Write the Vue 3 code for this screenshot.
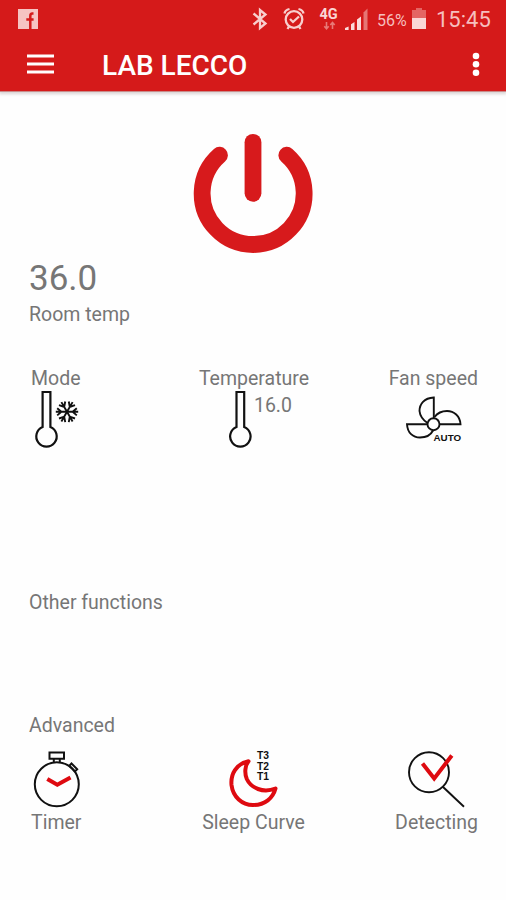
<template>
  <div class="screen">
    <header class="header">
      <div class="status-bar">
        <svg class="facebook" width="20" height="20" viewBox="0 0 20 20">
          <path fill="#f6c3c2" d="M0 0H20V20H0Z" />
          <path fill="none" stroke="#d51a1a" stroke-width="2.5" d="M15.5 4.6H14.3Q12.3 4.6 12.3 7V20M8.3 10.6H15.6" />
        </svg>
        <div class="status-icons">
          <svg width="182" height="38" viewBox="246 0 182 38">
            <path fill="none" stroke="#f8cfce" stroke-width="2.3" d="M253.5 13.5L265.5 23.5L260 28V10L265.5 14.5L253.5 24.5" />
            <g fill="none" stroke="#f8cfce" stroke-width="2.3">
              <circle cx="294" cy="19.5" r="8.3" />
              <path d="M290 19L293 22L299 16.5M284.5 13.5Q285 10 289.5 9M303.5 13.5Q303 10 298.5 9M289 26.5L287.5 29M299 26.5L300.5 29" />
            </g>
            <text class="network" x="319.5" y="18.5">4G</text>
            <path fill="none" stroke="#e87a78" stroke-width="1.6" d="M326.5 22V28.5M324.3 26.3L326.5 28.7L328.7 26.3M332.5 29V22.5M330.3 25L332.5 22.5L334.7 25" />
            <path fill="#fbdcdb" d="M345 30V28L348.6 26.5V30ZM351 24.2L354.5 22V30H351ZM357 19.5L361 16.5V30H357Z" />
            <path fill="#e67674" d="M363.5 12.5L367.5 8.5V30H363.5Z" />
            <text class="percent" x="377" y="25.5">56%</text>
            <path fill="#e46563" d="M412 10H416V8H422V10H426V18H412Z" />
            <path fill="#fad6d5" d="M412 18H426V29H412Z" />
          </svg>
          <span class="clock">15:45</span>
        </div>
      </div>
      <div class="toolbar">
        <svg width="27" height="21" viewBox="0 0 27 21">
          <path fill="none" stroke="#fff" stroke-width="3" d="M0 2H27M0 10H27M0 18H27" />
        </svg>
        <h1 class="title">LAB LECCO</h1>
        <svg class="more" width="8" height="26" viewBox="0 0 8 26">
          <g fill="#fff">
            <circle cx="4" cy="4" r="3.3" />
            <circle cx="4" cy="12.3" r="3.3" />
            <circle cx="4" cy="20.7" r="3.3" />
          </g>
        </svg>
      </div>
    </header>

    <main class="content">
      <svg class="power" width="122" height="122" viewBox="192 132 122 122">
        <g fill="none" stroke="#d71a1c" stroke-width="16.8" stroke-linecap="round">
          <path d="M219.5 155.2A51 51 0 1 0 286.8 155.2" />
          <path d="M253 142.3V193.3" />
        </g>
      </svg>

      <section class="room">
        <div class="room-value">36.0</div>
        <div class="label">Room temp</div>
      </section>

      <section class="row controls">
        <div class="item mode">
          <div class="label">Mode</div>
          <svg width="50" height="60" viewBox="32 390 50 60">
            <path class="line" stroke-width="2.2" d="M42.6 427V392H50.4V427A10.2 10.2 0 1 1 42.6 427Z" />
            <g class="line" stroke-width="1.9">
              <path
                v-for="angle in arms"
                :key="angle"
                :transform="`rotate(${angle} 67 411.8)`"
                d="M67 411.8H78.2M76.8 408.2L72.6 411.8L76.8 415.4"
              />
            </g>
          </svg>
        </div>
        <div class="item temperature">
          <div class="label">Temperature</div>
          <div class="temperature-row">
            <svg width="26" height="60" viewBox="228 390 26 60">
              <path class="line" stroke-width="2.2" d="M236.5 427V392H244.2V427A10.2 10.2 0 1 1 236.5 427Z" />
            </svg>
            <span class="label target">16.0</span>
          </div>
        </div>
        <div class="item fan">
          <div class="label">Fan speed</div>
          <svg width="62" height="60" viewBox="402 390 62 60">
            <g class="line" stroke-width="1.9">
              <circle cx="433.5" cy="424.2" r="6" />
              <path d="M433.8 418V397.5C424 398 419.5 404 419.5 411C420 416 423 420 427.5 423" />
              <path d="M439.5 424.2H460.5C460 416 454 411 447 411C441.5 411 437.5 413 434.5 417" />
              <path d="M427.5 424.2H407C407.5 433 413 437.5 420 437.5C427 437.5 431 434.5 433 430.5" />
            </g>
            <text class="auto" x="433.5" y="441">AUTO</text>
          </svg>
        </div>
      </section>

      <div class="label other">Other functions</div>
      <div class="label advanced">Advanced</div>

      <section class="row functions">
        <div class="item timer">
          <svg width="52" height="60" viewBox="31 749 52 60">
            <g class="line" stroke-width="2">
              <circle cx="56.8" cy="784.3" r="22" />
              <path d="M49.5 752.5H64V758.8H49.5ZM53.8 759V762.5M59.8 759V762.5" />
              <path d="M71.5 763.5L77.2 769.2L75 771.4L69.3 765.7Z" />
            </g>
            <path class="accent" d="M47.3 779L57.3 784.8L70.5 777.4" />
          </svg>
          <div class="label">Timer</div>
        </div>
        <div class="item sleep">
          <svg width="52" height="60" viewBox="228 749 52 60">
            <path class="accent" stroke-linejoin="round" d="M248.5 761.3C236 764 230.5 774 231.5 785C233 797 242 805 253 805C265 805 273 798 275.5 788.5C263 793.5 251 788 246.8 779C244.3 773 245 765.5 248.5 761.3Z" />
            <g class="steps">
              <text x="257" y="759.2">T3</text>
              <text x="257" y="769.7">T2</text>
              <text x="257" y="780.2">T1</text>
            </g>
          </svg>
          <div class="label">Sleep Curve</div>
        </div>
        <div class="item detecting">
          <svg width="60" height="60" viewBox="406 749 60 60">
            <g class="line" stroke-width="1.9">
              <circle cx="429" cy="772.2" r="20" />
              <path d="M442.5 786.5L464 806.8" />
            </g>
            <path class="accent" d="M422.5 763.5L434.2 778.5L451.8 755.5" />
          </svg>
          <div class="label">Detecting</div>
        </div>
      </section>
    </main>
  </div>
</template>

<script setup>
// snowflake arms, in degrees
const arms = [0, 60, 120, 180, 240, 300]
</script>

<style>
body {
  margin: 0;
  background: #fefefe;
}
</style>

<style scoped>
.screen {
  width: 506px;
  height: 900px;
  overflow: hidden;
  background: #fefefe;
  font-family: Roboto, "Liberation Sans", sans-serif;
  color: #767676;
}

svg {
  display: block;
  flex: none;
}

.header {
  height: 91px;
  background: #d51a1a;
  border-bottom: 1px solid #c98b8a;
  box-shadow: 0 1px 3px 1px #d8d3d3;
}

.status-bar {
  display: flex;
  justify-content: space-between;
  height: 38px;
}

.facebook {
  margin: 9px 0 0 18px;
}

.status-icons {
  display: flex;
  width: 260px;
}

.network {
  font-size: 14.5px;
  font-weight: 700;
  fill: #fad6d5;
}

.percent {
  font-size: 16px;
  fill: #f6bfbe;
}

.clock {
  margin-left: 8px;
  line-height: 40px;
  font-size: 22px;
  color: #f6bfbe;
}

.toolbar {
  display: flex;
  align-items: center;
  height: 53px;
  padding-left: 27px;
}

.title {
  margin: 0 0 0 48px;
  height: 53px;
  line-height: 55px;
  font-size: 28px;
  font-weight: 500;
  color: #fff;
}

.more {
  margin: 0 26px 0 auto;
}

.power {
  margin: 40px auto 0;
}

.room {
  margin: 5px 0 0 29px;
}

.room-value {
  height: 43px;
  line-height: 40px;
  font-size: 35px;
}

.label {
  height: 24px;
  line-height: 26px;
  font-size: 19.5px;
  white-space: nowrap;
}

.line {
  fill: none;
  stroke: #111;
}

.accent {
  fill: none;
  stroke: #de0a10;
  stroke-width: 4;
}

/* the middle column stays centred whatever the side labels measure */
.row {
  display: grid;
  grid-template-columns: 1fr auto 1fr;
}

.item:last-child {
  justify-self: end;
}

.controls {
  margin-top: 40px;
  padding: 0 28px 0 31px;
}

.temperature {
  margin-left: -1px;
}

.temperature-row {
  display: flex;
  margin-left: 29px;
}

.target {
  margin-top: 3px;
}

.mode svg {
  margin-left: 1px;
}

.fan svg {
  margin-left: 13px;
}

.auto {
  font: 700 9.8px "Liberation Sans", sans-serif;
  fill: #111;
}

.other {
  margin: 140px 0 0 29px;
}

.advanced {
  margin: 99px 0 0 29px;
}

.functions {
  margin-top: 12px;
  padding: 0 28px 0 31px;
}

.timer .label,
.sleep .label,
.detecting .label {
  margin-top: 1px;
}

.sleep {
  margin-left: -2px;
}

.sleep svg {
  margin-left: 26px;
}

.detecting svg {
  margin-left: 11px;
}

.steps {
  font: 700 10.3px "Liberation Sans", sans-serif;
  fill: #111;
}
</style>
